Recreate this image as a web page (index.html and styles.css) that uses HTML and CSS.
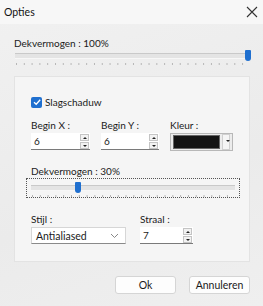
FILE: index.html
```html
<!DOCTYPE html>
<html lang="nl">
<head>
    <meta charset="UTF-8">
    <title>Opties</title>
    <link rel="stylesheet" href="styles.css">
</head>
<body>
    <div class="window">
        <div class="titlebar">
            <span class="title">Opties</span>
            <svg class="close" width="12" height="12" viewBox="0 0 12 12">
                <path d="M1 1 L11 11 M11 1 L1 11" stroke="#333" stroke-width="1.1"/>
            </svg>
        </div>

        <div class="content">
            <div class="label top-label">Dekvermogen : 100%</div>
            <div class="slider wide">
                <div class="track"></div>
                <div class="thumb" style="left: 230px"></div>
                <div class="ticks"></div>
            </div>

            <div class="group">
                <label class="check">
                    <span class="box">
                        <svg width="10" height="10" viewBox="0 0 10 10">
                            <path d="M2 5.2 L4.2 7.3 L8.2 2.8" stroke="#fff" stroke-width="1.3" fill="none"/>
                        </svg>
                    </span>
                    Slagschaduw
                </label>

                <div class="row">
                    <div class="field">
                        <div class="label">Begin X :</div>
                        <div class="spin w59">
                            <span class="val">6</span>
                            <span class="arrows"><i class="up"></i><i class="down"></i></span>
                        </div>
                    </div>
                    <div class="field">
                        <div class="label">Begin Y :</div>
                        <div class="spin w58">
                            <span class="val">6</span>
                            <span class="arrows"><i class="up"></i><i class="down"></i></span>
                        </div>
                    </div>
                    <div class="field">
                        <div class="label">Kleur :</div>
                        <div class="color">
                            <span class="swatch"></span>
                            <span class="drop"><i class="down"></i></span>
                        </div>
                    </div>
                </div>

                <div class="label op-label">Dekvermogen : 30%</div>
                <div class="focus">
                    <div class="slider narrow">
                        <div class="track"></div>
                        <div class="thumb" style="left: 44px"></div>
                        <div class="ticks"></div>
                    </div>
                </div>

                <div class="row bottom-row">
                    <div class="field">
                        <div class="label">Stijl :</div>
                        <div class="select">
                            <span class="val">Antialiased</span>
                            <svg width="9" height="6" viewBox="0 0 9 6">
                                <path d="M1 1 L4.5 4.5 L8 1" stroke="#888" fill="none"/>
                            </svg>
                        </div>
                    </div>
                    <div class="field">
                        <div class="label">Straal :</div>
                        <div class="spin w53">
                            <span class="val">7</span>
                            <span class="arrows"><i class="up"></i><i class="down"></i></span>
                        </div>
                    </div>
                </div>
            </div>

            <div class="buttons">
                <button class="btn">Ok</button>
                <button class="btn">Annuleren</button>
            </div>
        </div>
    </div>
</body>
</html>
```

FILE: styles.css
```css
body {
    margin: 0;
    padding: 0;
    background-color: #ededed;
    font-family: Lato, "Noto Sans", sans-serif;
    font-size: 10px;
    color: #1a1a1a;
}

.window {
    width: 263px;
    height: 306px;
    background: linear-gradient(160deg, #f1f1f1 0%, #ebebeb 60%, #efefef 100%);
    overflow: hidden;
}

.titlebar {
    height: 24px;
    background-color: #f7f7f7;
    display: flex;
    align-items: center;
    justify-content: space-between;
    padding: 0 5px 0 4px;
}

.title {
    font-size: 10.5px;
    color: #111;
}

.content {
    padding: 0 13px 0 14px;
}

.label {
    line-height: 14px;
    height: 14px;
}

.top-label {
    margin-top: 12px;
}

/* sliders */
.slider {
    position: relative;
    height: 17px;
}

.slider .track {
    position: absolute;
    left: 0;
    right: 0;
    top: 3px;
    height: 4px;
    background-color: #e4e4e4;
    border-top: 1px solid #c9c9c9;
    border-bottom: 1px solid #f7f7f7;
}

.slider .thumb {
    position: absolute;
    top: 0;
    width: 6px;
    height: 11px;
    background-color: #1f6fcf;
    border-radius: 1px 1px 3px 3px;
}

.slider .ticks {
    position: absolute;
    left: 1px;
    right: 1px;
    top: 13px;
    height: 2px;
    background-image: linear-gradient(to right, #b5b5b5 1px, transparent 1px);
    background-size: 7.8px 2px;
}

.wide {
    margin-left: 1px;
    width: 235px;
}

/* group box */
.group {
    margin-top: 9px;
    width: 236px;
    height: 186px;
    box-sizing: border-box;
    background-color: #f5f5f5;
    border: 1px solid #e3e3e3;
    padding: 19px 0 0 16px;
}

.check {
    display: flex;
    align-items: center;
    gap: 3px;
    height: 12px;
}

.check .box {
    width: 11px;
    height: 11px;
    border-radius: 2px;
    background-color: #1f6fcf;
    display: flex;
    align-items: center;
    justify-content: center;
}

.row {
    display: flex;
    gap: 11px;
    margin-top: 10px;
}

.field .label {
    margin-bottom: 1px;
}

.spin, .select {
    height: 17px;
    box-sizing: border-box;
    background-color: #fff;
    border-bottom: 1px solid #7a7a7a;
    display: flex;
    align-items: center;
    justify-content: space-between;
    padding-left: 3px;
}

.w59 { width: 59px; }
.w58 { width: 58px; }
.w53 { width: 53px; }

.arrows {
    display: flex;
    flex-direction: column;
    width: 9px;
    height: 15px;
    margin-right: 1px;
    gap: 1px;
}

.arrows i {
    flex: 1;
    border: 1px solid #c4c4c4;
    background-color: #f2f2f2;
    position: relative;
}

.arrows i::after, .drop i::after {
    content: "";
    position: absolute;
    left: 2px;
    top: 2px;
    border-left: 2px solid transparent;
    border-right: 2px solid transparent;
}

.arrows .up::after {
    border-bottom: 2px solid #222;
}

.arrows .down::after, .drop .down::after {
    border-top: 2px solid #222;
}

.color {
    width: 63px;
    height: 18px;
    box-sizing: border-box;
    border: 1px solid #b8b8b8;
    background-color: #ececec;
    display: flex;
    align-items: center;
    padding: 0 2px;
    gap: 2px;
}

.swatch {
    width: 45px;
    height: 12px;
    background-color: #141414;
    border: 1px solid #666;
}

.drop {
    flex: 1;
    height: 14px;
    background-color: #f5f5f5;
    border: 1px solid #d0d0d0;
    position: relative;
}

.drop i::after {
    left: 3px;
    top: 5px;
}

.op-label {
    margin-top: 13px;
}

.focus {
    margin-left: -5px;
    width: 214px;
    height: 20px;
    box-sizing: border-box;
    border: 1px dotted #555;
    padding: 3px 4px 0 4px;
}

.narrow {
    width: 204px;
}

.bottom-row {
    margin-top: 14px;
    gap: 14px;
}

.select {
    width: 95px;
    border: 1px solid #d6d6d6;
    border-bottom: 1px solid #8a8a8a;
    padding: 0 6px 0 4px;
    font-size: 10.5px;
}

.buttons {
    display: flex;
    justify-content: flex-end;
    gap: 13px;
    margin-top: 14px;
    width: 236px;
}

.btn {
    width: 61px;
    height: 18px;
    padding: 0;
    font-family: Lato, "Noto Sans", sans-serif;
    font-size: 10.5px;
    color: #1a1a1a;
    background-color: #fdfdfd;
    border: 1px solid #d5d5d5;
    border-radius: 3px;
}
```
